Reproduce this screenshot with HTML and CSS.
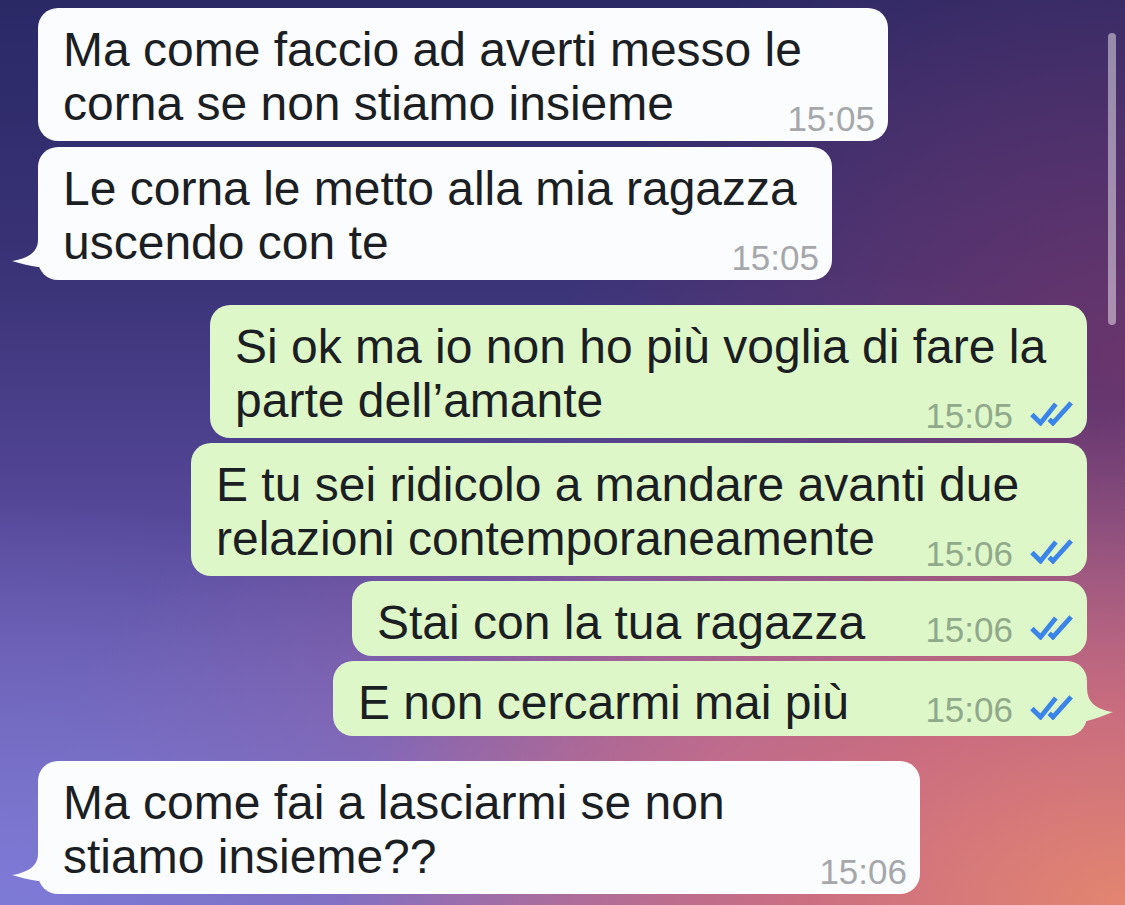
FILE: index.html
```html
<!DOCTYPE html>
<html lang="it">
<head>
  <meta charset="UTF-8" />
  <meta name="viewport" content="width=device-width, initial-scale=1.0"/>
  <title>Chat</title>
  <link rel="stylesheet" href="styles.css">
</head>
<body>
  <main class="chat">
    <!-- incoming -->
    <section class="group">
      <div class="bubble in m1">
        <p class="text">Ma come faccio ad averti messo le<br>corna se non stiamo insieme</p>
        <div class="meta"><span class="time">15:05</span></div>
      </div>
      <div class="bubble in m2">
        <p class="text">Le corna le metto alla mia ragazza<br>uscendo con te</p>
        <div class="meta"><span class="time">15:05</span></div>
        <svg class="tail tail-in" viewBox="0 0 30 30"><path d="M30 0 L28 0 C28 10 21 18 2 21 C12 24 20 26 28 27 L30 27 Z"/></svg>
      </div>
    </section>

    <!-- outgoing -->
    <section class="group sent">
      <div class="bubble out m3">
        <p class="text">Si ok ma io non ho più voglia di fare la<br>parte dell’amante</p>
        <div class="meta">
          <span class="time">15:05</span>
          <svg class="ticks" viewBox="0 0 46 26"><path d="M2 14 L11 23 L27 3 M20 19 L24 23 L43 2"/></svg>
        </div>
      </div>
      <div class="bubble out m4">
        <p class="text">E tu sei ridicolo a mandare avanti due<br>relazioni contemporaneamente</p>
        <div class="meta">
          <span class="time">15:06</span>
          <svg class="ticks" viewBox="0 0 46 26"><path d="M2 14 L11 23 L27 3 M20 19 L24 23 L43 2"/></svg>
        </div>
      </div>
      <div class="bubble out single m5">
        <p class="text">Stai con la tua ragazza</p>
        <div class="meta">
          <span class="time">15:06</span>
          <svg class="ticks" viewBox="0 0 46 26"><path d="M2 14 L11 23 L27 3 M20 19 L24 23 L43 2"/></svg>
        </div>
      </div>
      <div class="bubble out single m6">
        <p class="text">E non cercarmi mai più</p>
        <div class="meta">
          <span class="time">15:06</span>
          <svg class="ticks" viewBox="0 0 46 26"><path d="M2 14 L11 23 L27 3 M20 19 L24 23 L43 2"/></svg>
        </div>
        <svg class="tail tail-out" viewBox="0 0 30 36"><path d="M0 0 L2 0 C2 14 9 22 28 25 C18 29 10 32 2 34 L0 34 Z"/></svg>
      </div>
    </section>

    <!-- incoming -->
    <section class="group">
      <div class="bubble in m7">
        <p class="text">Ma come fai a lasciarmi se non<br>stiamo insieme??</p>
        <div class="meta"><span class="time">15:06</span></div>
        <svg class="tail tail-in" viewBox="0 0 30 30"><path d="M30 0 L28 0 C28 10 21 18 2 21 C12 24 20 26 28 27 L30 27 Z"/></svg>
      </div>
    </section>
  </main>

  <div class="scrollbar"></div>
</body>
</html>
```

FILE: styles.css
```css
/* General Reset */
* {
    margin: 0;
    padding: 0;
    box-sizing: border-box;
}
html, body {
    height: 100%;
}
body {
    position: relative;
    overflow: hidden;
    font-family: 'Liberation Sans', Arial, sans-serif;
    color: #1b1f23;
    background:
        radial-gradient(ellipse 70% 55% at 100% 100%, #e3856f 0%, rgba(214, 112, 122, 0.85) 40%, rgba(200, 100, 130, 0) 100%),
        radial-gradient(ellipse 50% 55% at 100% 40%, rgba(112, 52, 104, 0.85) 0%, rgba(112, 52, 104, 0) 100%),
        radial-gradient(ellipse 60% 45% at 0% 100%, #7d7ad6 0%, rgba(124, 122, 212, 0) 100%),
        radial-gradient(ellipse 60% 40% at 65% 85%, rgba(176, 104, 160, 0.8) 0%, rgba(176, 104, 160, 0) 100%),
        linear-gradient(180deg, #2a2966 0%, #3a3377 30%, #584a9c 60%, #7a68b8 100%);
}
.chat {
    display: flex;
    flex-direction: column;
    gap: 25px;
    padding: 8px 38px 0;
}
.group {
    display: flex;
    flex-direction: column;
    gap: 6px;
}
.group.sent {
    gap: 5px;
}
.bubble {
    position: relative;
    padding: 15px 13px 5px 25px;
    border-radius: 20px;
}
.bubble.in {
    align-self: flex-start;
    background: #fbfcfe;
}
.bubble.out {
    align-self: flex-end;
    background: #def7c8;
}
.text {
    font-size: 48px;
    line-height: 54px;
    white-space: nowrap;
}
.meta {
    display: flex;
    justify-content: flex-end;
    align-items: flex-start;
    gap: 17px;
    height: 35px;
    margin-top: -30px;
}
.time {
    font-size: 35px;
    line-height: 35px;
    color: #a5a7aa;
}
.out .time {
    color: #8fa98a;
}
.ticks {
    width: 44px;
    height: 25px;
    margin-top: 3px;
    fill: none;
    stroke: #3a84ea;
    stroke-width: 5;
    stroke-linejoin: miter;
}

/* one-line messages keep the time on the same row */
.bubble.single {
    display: flex;
    align-items: flex-end;
    justify-content: space-between;
    padding-bottom: 6px;
}
.single .meta {
    margin-top: 0;
    margin-bottom: 3px;
}

/* bubble tails */
.tail {
    position: absolute;
    width: 30px;
}
.tail-in {
    left: -28px;
    bottom: 10px;
    height: 30px;
    fill: #fbfcfe;
}
.tail-out {
    right: -28px;
    bottom: 13px;
    height: 36px;
    fill: #def7c8;
}

/* widths of each bubble */
.m1 { width: 850px; }
.m2 { width: 794px; }
.m3 { width: 877px; }
.m4 { width: 896px; }
.m5 { width: 735px; }
.m6 { width: 754px; }
.m7 { width: 882px; }

.scrollbar {
    position: absolute;
    top: 33px;
    right: 9px;
    width: 8px;
    height: 292px;
    border-radius: 4px;
    background: rgba(255, 255, 255, 0.45);
}
```
